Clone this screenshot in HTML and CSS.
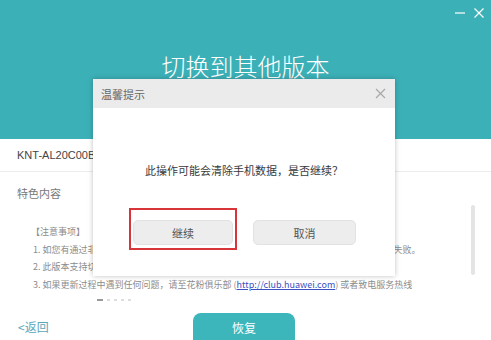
FILE: index.html
```html
<!DOCTYPE html>
<html lang="zh-CN">
<head>
  <meta charset="UTF-8" />
  <title>切换到其他版本</title>
  <link rel="stylesheet" href="styles.css">
</head>
<body>

  <div class="app">
    <header class="top">
      <div class="win-ctrl">
        <svg width="12" height="12" viewBox="0 0 12 12"><path d="M1 6 H11" stroke="#fff" stroke-width="1.2"/></svg>
        <svg width="12" height="12" viewBox="0 0 12 12"><path d="M1.5 1.5 L10.5 10.5 M10.5 1.5 L1.5 10.5" stroke="#fff" stroke-width="1.2"/></svg>
      </div>
      <h1>切换到其他版本</h1>
    </header>

    <main class="content">
      <div class="model">KNT-AL20C00B</div>
      <div class="features">特色内容</div>
      <div class="notes">
        <p class="notes-title">【注意事项】</p>
        <p>1. 如您有通过非官方渠道升级过系统，请先恢复至官方版本后进行切换，否则可能导致升级失败。</p>
        <p>2. 此版本支持切换回官方稳定版本。</p>
        <p>3. 如果更新过程中遇到任何问题，请至花粉俱乐部 (<a href="#">http://club.huawei.com</a>) 或者致电服务热线</p>
      </div>
      <div class="pager">
        <span class="dash"></span>
        <span class="dot"></span>
        <span class="dot"></span>
        <span class="dot"></span>
        <span class="dot"></span>
      </div>
      <div class="scrollbar"></div>
    </main>

    <footer class="bottom">
      <a class="back" href="#">&lt;返回</a>
      <button class="restore">恢复</button>
    </footer>

    <div class="dialog">
      <div class="dialog-head">
        <span>温馨提示</span>
        <svg width="11" height="11" viewBox="0 0 11 11"><path d="M1 1 L10 10 M10 1 L1 10" stroke="#a8a8a8" stroke-width="1.2"/></svg>
      </div>
      <div class="dialog-body">
        <p class="msg">此操作可能会清除手机数据，是否继续？</p>
        <div class="actions">
          <button class="btn marked">继续</button>
          <button class="btn">取消</button>
        </div>
      </div>
    </div>
  </div>

</body>
</html>
```

FILE: styles.css
```css
body {
  margin: 0;
  font-family: "Noto Sans CJK SC", "Liberation Sans", sans-serif;
  background-color: #fff;
}

.app {
  position: relative;
  width: 491px;
  height: 340px;
  overflow: hidden;
  display: flex;
  flex-direction: column;
}

.top {
  height: 139px;
  flex-shrink: 0;
  background-color: #3cb0b7;
  display: flex;
  flex-direction: column;
}

.win-ctrl {
  display: flex;
  justify-content: flex-end;
  gap: 7px;
  padding: 7px 6px 0 0;
}

.top h1 {
  margin: 34px 0 0;
  text-align: center;
  color: #fff;
  font-size: 24px;
  font-weight: 200;
  line-height: 26px;
}

.content {
  position: relative;
  flex: 1;
  display: flex;
  flex-direction: column;
}

.model {
  height: 32px;
  line-height: 32px;
  padding-left: 17px;
  font-family: "Liberation Sans", "Noto Sans CJK SC", sans-serif;
  font-size: 11px;
  color: #444;
  border-bottom: 1px solid #ececec;
}

.features {
  margin-top: 13px;
  padding-left: 17px;
  font-size: 11px;
  line-height: 16px;
  color: #777;
}

.notes {
  margin-top: 22px;
  padding-left: 33px;
  font-size: 9px;
  line-height: 17.7px;
  color: #8c8c8c;
}

.notes p {
  margin: 0;
  white-space: nowrap;
}

.notes-title {
  text-indent: -2px;
}

.notes a {
  color: #3a4fc0;
}

.pager {
  display: flex;
  align-items: center;
  gap: 4px;
  margin-top: 5px;
  padding-left: 97px;
}

.dash {
  width: 6px;
  height: 2px;
  background-color: #999;
}

.dot {
  width: 3px;
  height: 2px;
  background-color: #ddd;
}

.scrollbar {
  position: absolute;
  right: 16px;
  top: 66px;
  width: 4px;
  height: 70px;
  background-color: #e4e4e4;
  border-radius: 2px;
}

.bottom {
  height: 27px;
  flex-shrink: 0;
  display: flex;
  align-items: flex-start;
}

.back {
  width: 175px;
  padding: 7px 0 0 18px;
  font-size: 12px;
  line-height: 14px;
  color: #5ba7ba;
  text-decoration: none;
}

.restore {
  width: 102px;
  height: 34px;
  border: none;
  border-radius: 8px 8px 0 0;
  background-color: #3cb5bb;
  color: #fff;
  font-family: inherit;
  font-size: 12px;
  padding: 0 0 6px;
}

.dialog {
  position: absolute;
  left: 93px;
  top: 79px;
  width: 302px;
  height: 197px;
  background-color: #fff;
  box-shadow: 0 0 5px rgba(0,0,0,0.25);
  display: flex;
  flex-direction: column;
}

.dialog-head {
  height: 29px;
  background-color: #ebebeb;
  display: flex;
  align-items: center;
  justify-content: space-between;
  padding: 0 9px 0 8px;
  font-size: 11px;
  color: #666;
}

.dialog-body {
  flex: 1;
  display: flex;
  flex-direction: column;
  align-items: center;
}

.msg {
  margin: 55px 0 0;
  font-size: 11px;
  line-height: 14px;
  color: #3a3a3a;
}

.actions {
  display: flex;
  gap: 20px;
  margin-top: 43px;
  margin-left: 1px;
}

.btn {
  position: relative;
  width: 100px;
  height: 25px;
  border: 1px solid #e2e2e2;
  border-radius: 5px;
  background-color: #ededed;
  font-family: inherit;
  font-size: 11px;
  color: #555;
}

.btn + .btn {
  width: 103px;
}

.marked::after {
  content: "";
  position: absolute;
  left: -5px;
  right: -5px;
  top: -13px;
  bottom: -6px;
  border: 2px solid #d8353b;
}
```
